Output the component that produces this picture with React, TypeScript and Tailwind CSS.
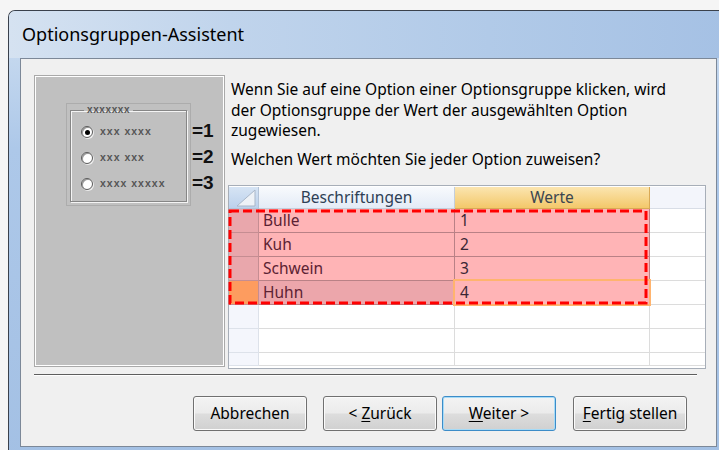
import React from 'react';

type Option = { label: string; value: string; active?: boolean };

const options: Option[] = [
  { label: 'Bulle', value: '1' },
  { label: 'Kuh', value: '2' },
  { label: 'Schwein', value: '3' },
  { label: 'Huhn', value: '4', active: true },
];

const previewItems = ['xxx xxxx', 'xxx xxx', 'xxxx xxxxx'];

const Radio: React.FC<{ checked?: boolean }> = ({ checked }) => (
  <span className="flex w-[12px] h-[12px] items-center justify-center rounded-full border border-[#5a5a5a] bg-white shadow-[1px_1px_0_#ececec,inset_1px_1px_0_#9a9a9a]">
    {checked && <span className="w-[5px] h-[5px] rounded-full bg-black" />}
  </span>
);

const WizardButton: React.FC<{ primary?: boolean; children: React.ReactNode; className?: string }> = ({
  primary,
  children,
  className = '',
}) => (
  <button
    className={`w-[114px] h-[35px] rounded-[3px] border text-[15.5px] text-black bg-[linear-gradient(to_bottom,#f3f3f3_0%,#ebebeb_48%,#dddddd_52%,#d0d0d0_100%)] ${
      primary
        ? 'border-[#3c8cc8] shadow-[inset_0_0_0_1px_#a6dbf7]'
        : 'border-[#707070] shadow-[inset_0_0_0_1px_#fbfbfb]'
    } ${className}`}
  >
    {children}
  </button>
);

const App: React.FC = () => {
  return (
    <div className="w-[719px] h-[450px] overflow-hidden bg-[#f5f5f5] pt-[10px] pl-[8px] font-['Noto_Sans',sans-serif]">
      {/* Window frame */}
      <div className="w-[740px] h-[460px] flex flex-col rounded-tl-[7px] border-t border-l border-[#3a414c] bg-[linear-gradient(to_bottom,#cfdff1,#adc8e9_30%,#a3c0e4)]">
        {/* Title bar */}
        <div className="h-[47px] flex items-center pl-[13px] bg-[linear-gradient(to_right,#d5e2f1,#c0d4ec_30%,#b1cae8_65%,#a4c0e4)] rounded-tl-[6px]">
          <span className="text-[18px] text-black pb-[1px]">Optionsgruppen-Assistent</span>
        </div>

        <div className="pl-[11px]">
          {/* Client area */}
          <div className="w-[697px] h-[389px] border border-[#7c8898] bg-[#f0f0f0] flex flex-col">
            <div className="flex pl-[13px] pt-[16px]">
              {/* Preview of the option group */}
              <div className="w-[191px] h-[292px] border border-[#a9a9a9]">
                <div className="w-full h-full border border-white bg-[#c0c0c0] pl-[30px] pt-[26px]">
                  <div className="flex">
                    <div className="w-[125px] h-[103px] border border-[#acacac] px-[3px] pb-[3px]">
                      <fieldset className="w-full h-full border border-[#868686] shadow-[inset_1px_1px_0_#f4f4f4,1px_1px_0_#f4f4f4]">
                        <legend className="ml-[13px] px-[3px] text-[10px] leading-[12px] tracking-[0.6px] font-bold text-[#555] font-['Liberation_Sans',sans-serif]">
                          xxxxxxx
                        </legend>
                        <div className="pl-[10px] pt-[3px]">
                          {previewItems.map((item, i) => (
                            <div key={item} className="h-[26px] flex items-center gap-[7px]">
                              <Radio checked={i === 0} />
                              <span className="text-[10.5px] tracking-[1px] font-bold text-[#555] font-['Liberation_Sans',sans-serif]">
                                {item}
                              </span>
                            </div>
                          ))}
                        </div>
                      </fieldset>
                    </div>
                    <div className="ml-[1px] pt-[15px] font-['Liberation_Sans',sans-serif] font-bold text-[19px] text-[#111]">
                      {['=1', '=2', '=3'].map((n) => (
                        <div key={n} className="h-[26px] flex items-center">
                          {n}
                        </div>
                      ))}
                    </div>
                  </div>
                </div>
              </div>

              {/* Explanation and value grid */}
              <div className="ml-[3px] w-[478px] flex flex-col">
                <div className="w-[458px] pl-[3px] pt-[4px] text-[15.5px] leading-[20.5px] text-black">
                  <p>
                    Wenn Sie auf eine Option einer Optionsgruppe klicken, wird der Optionsgruppe der Wert der
                    ausgewählten Option zugewiesen.
                  </p>
                  <p className="mt-[8px]">Welchen Wert möchten Sie jeder Option zuweisen?</p>
                </div>

                <div className="relative mt-[16px] h-[184px] border border-[#a7aeb8] bg-white pt-[1px] text-[15.5px]">
                  {/* Header */}
                  <div className="flex h-[22px]">
                    <div className="w-[30px] border-r border-b border-[#b3c3d8] bg-[linear-gradient(to_bottom,#d6e4f4,#bcd1ec)]">
                      <svg width="29" height="21" viewBox="0 0 29 21">
                        <polygon points="8,19 26,3 26,19" fill="#eef2f7" stroke="#a9b7c9" strokeWidth="1" />
                      </svg>
                    </div>
                    <div className="w-[196px] flex items-center justify-center border-r border-b border-[#c3cedc] bg-[linear-gradient(to_bottom,#f8fafd,#e3ebf6)] text-[#2e3f55]">
                      Beschriftungen
                    </div>
                    <div className="w-[195px] flex items-center justify-center border-r border-b border-[#d9a955] bg-[linear-gradient(to_bottom,#fbe5b0,#f3c86a)] text-[#3b4650]">
                      Werte
                    </div>
                    <div className="flex-1 border-b border-[#d8dde6] bg-[#f3f5fb]" />
                  </div>

                  {/* Option rows */}
                  {options.map((o) => (
                    <div key={o.label} className="flex h-[24px]">
                      <div
                        className={`w-[30px] border-r border-b border-[#c58d92] ${
                          o.active ? 'bg-[#fd9c5f]' : 'bg-[#e9a7ac]'
                        }`}
                      />
                      <div
                        className={`w-[196px] flex items-center pl-[4px] border-r border-b border-[#b98186] text-[#5c2233] ${
                          o.active ? 'bg-[#eca6ab]' : 'bg-[#ffb4b6]'
                        }`}
                      >
                        {o.label}
                      </div>
                      <div className="relative w-[195px] flex items-center pl-[5px] border-r border-b border-[#b98186] bg-[#ffb4b6] text-[#3a2634]">
                        {o.value}
                        {o.active && <div className="absolute -inset-[2px] border-2 border-[#ffb46e]" />}
                      </div>
                      <div className="flex-1 border-b border-[#dcdcdc] bg-white" />
                    </div>
                  ))}

                  {/* Empty rows */}
                  {[24, 24, 13].map((h, i) => (
                    <div key={i} className="flex" style={{ height: h }}>
                      <div className="w-[30px] border-r border-b border-[#dde2ea] bg-[#f4f6fc]" />
                      <div className="w-[196px] border-r border-b border-[#dcdcdc]" />
                      <div className="w-[195px] border-r border-b border-[#dcdcdc]" />
                      <div className="flex-1 border-b border-[#dcdcdc]" />
                    </div>
                  ))}

                  {/* Selection marquee */}
                  <svg className="absolute left-[-1px] top-[-1px] pointer-events-none" width="478" height="184">
                    <rect
                      x="2"
                      y="26"
                      width="416"
                      height="92"
                      fill="none"
                      stroke="#ff0000"
                      strokeWidth="3"
                      strokeDasharray="9 4"
                    />
                  </svg>
                </div>
              </div>
            </div>

            {/* Separator */}
            <div className="ml-[13px] mt-[5px] w-[663px] h-[2px] border-t border-[#5e5e5e] border-b border-b-white" />

            {/* Buttons */}
            <div className="flex ml-[172px] mt-[20px]">
              <WizardButton>Abbrechen</WizardButton>
              <WizardButton className="ml-[16px]">
                &lt; <span className="underline underline-offset-2">Z</span>urück
              </WizardButton>
              <WizardButton primary className="ml-[5px]">
                <span className="underline underline-offset-2">W</span>eiter &gt;
              </WizardButton>
              <WizardButton className="ml-[17px]">
                <span className="underline underline-offset-2">F</span>ertig stellen
              </WizardButton>
            </div>
          </div>
        </div>
      </div>
    </div>
  );
};

export default App;
